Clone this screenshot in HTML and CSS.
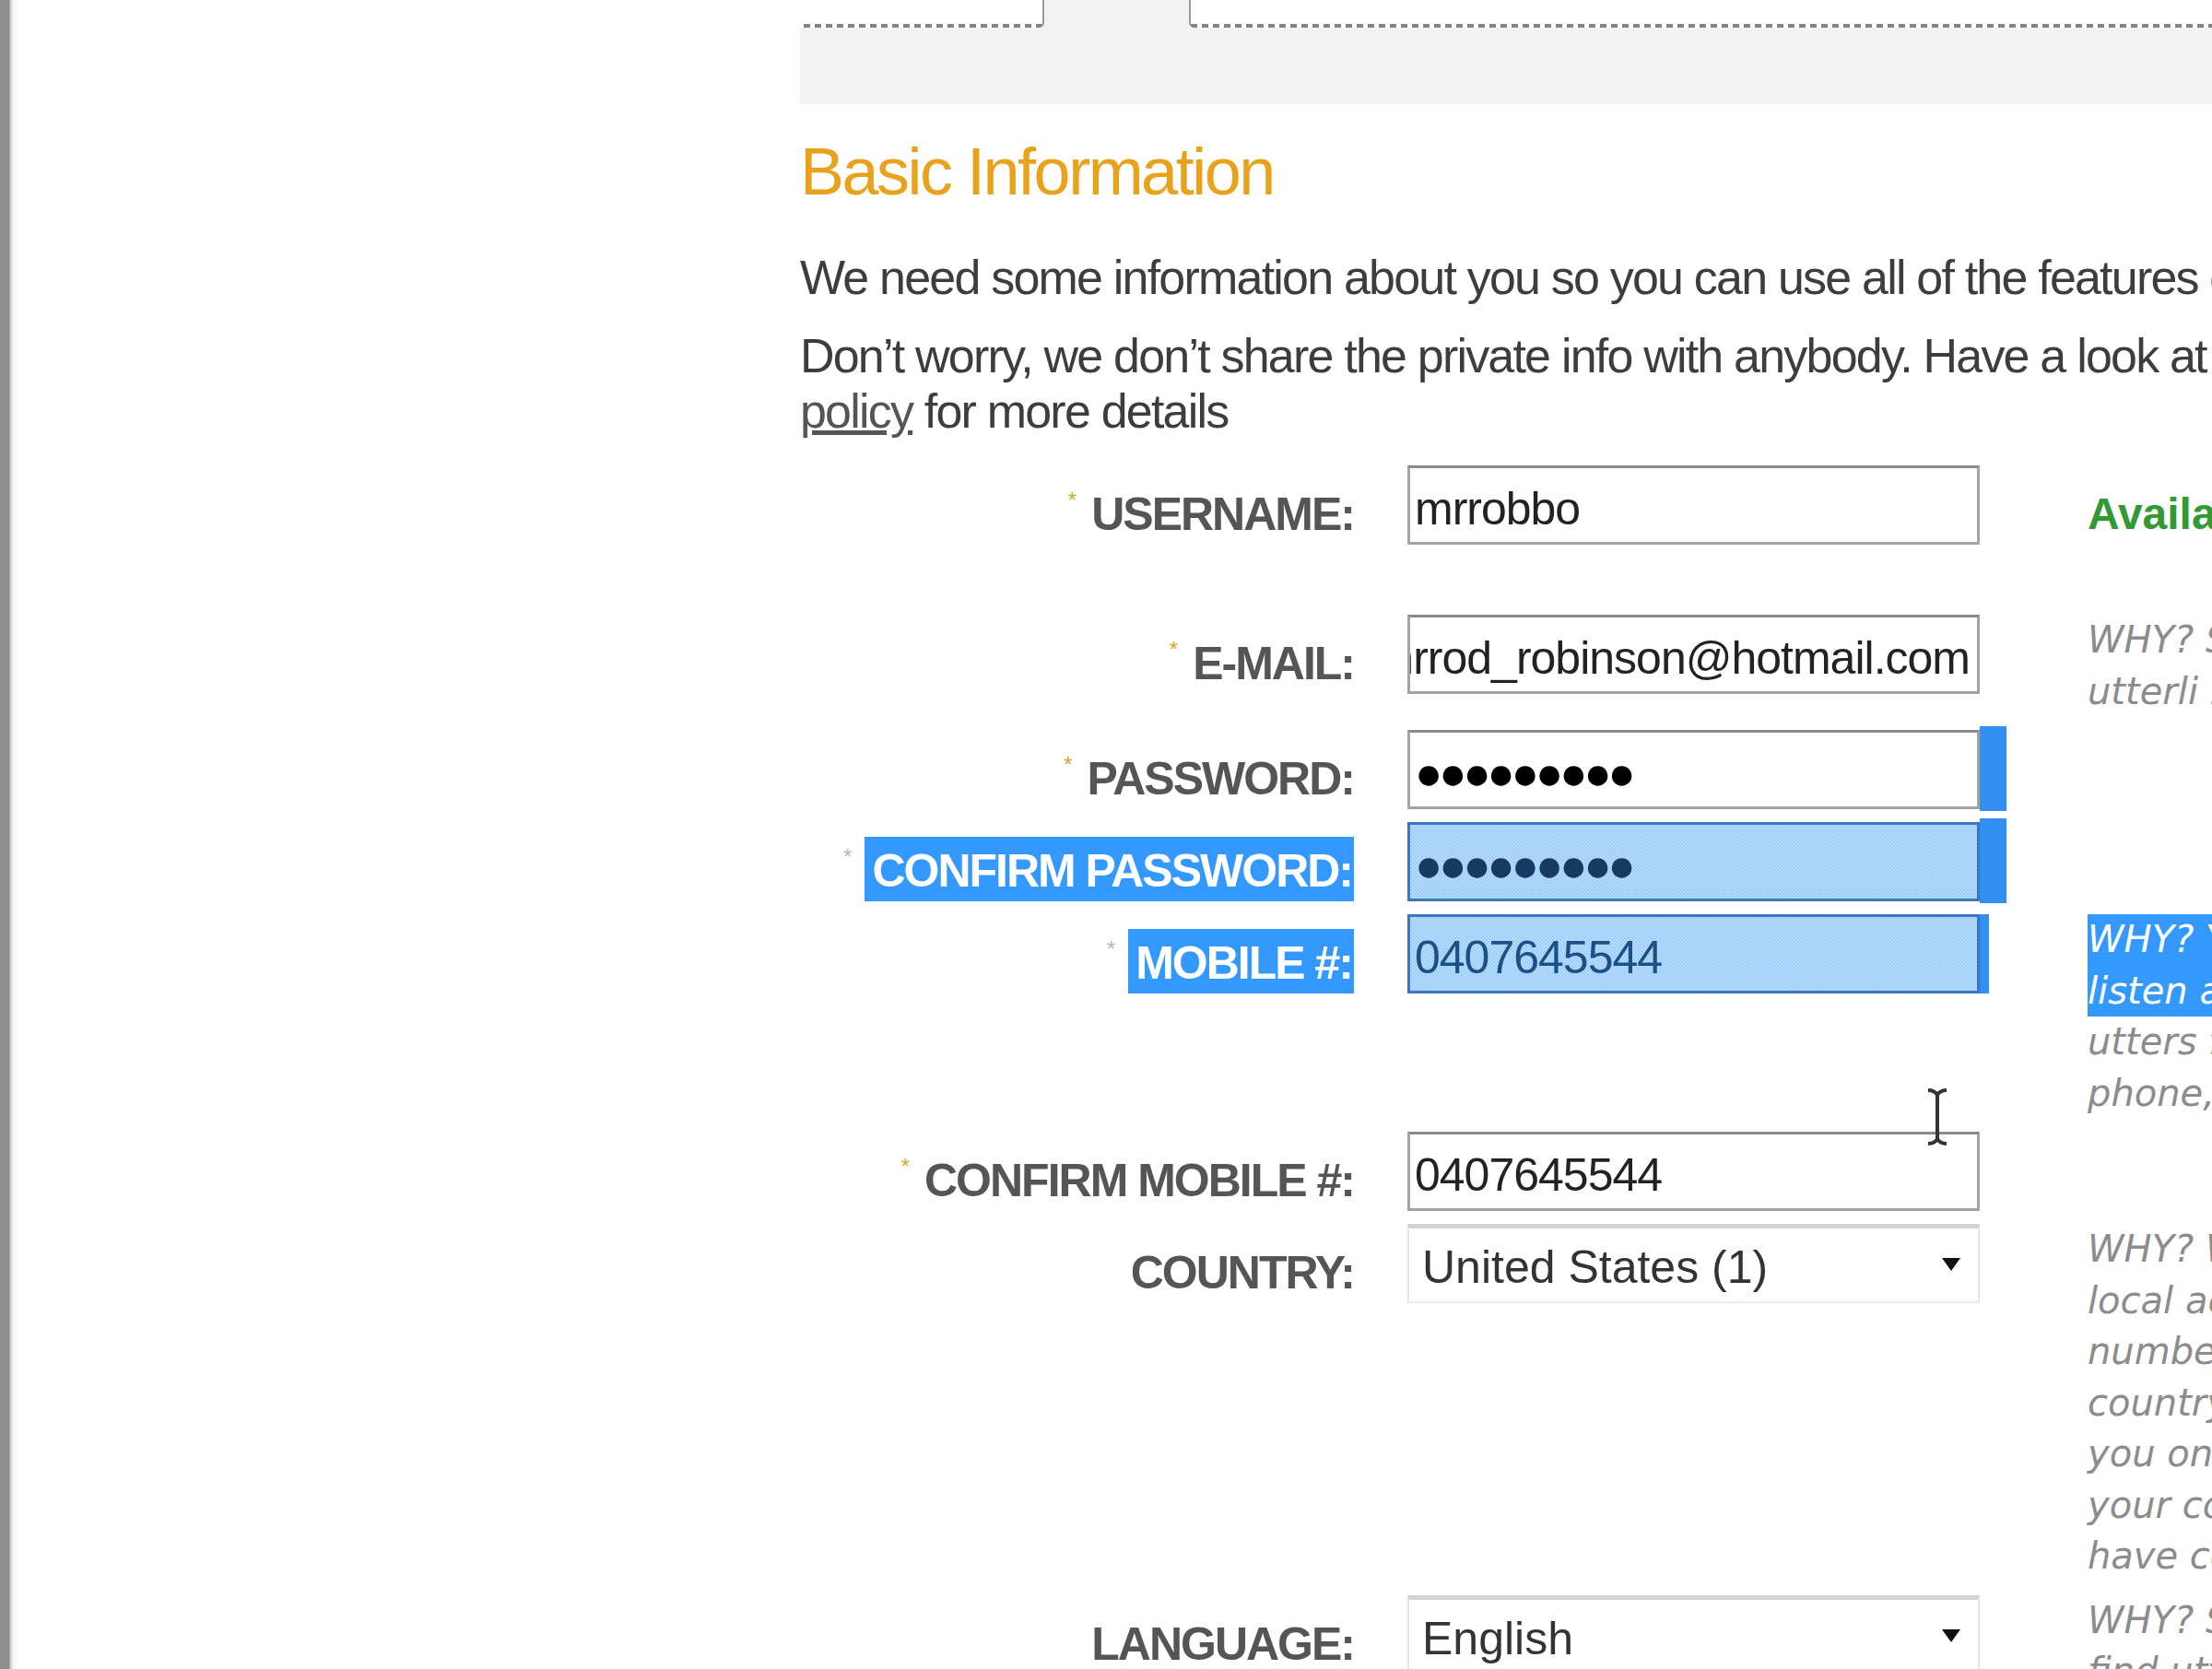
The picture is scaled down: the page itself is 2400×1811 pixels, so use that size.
FILE: index.html
```html
<!DOCTYPE html>
<html lang="en">
<head>
  <meta charset="UTF-8">
  <title>utterli – Sign up</title>
  <link rel="stylesheet" href="styles.css">
</head>
<body>
  <div class="edge"></div>

  <div class="page">
    <div class="tabs">
      <div class="tab"></div>
      <div class="tab active"></div>
      <div class="tab rest"></div>
    </div>
    <div class="tab-panel"></div>

    <h2 class="section-title">Basic Information</h2>
    <p class="intro first">We need some information about you so you can use all of the features of utterli.</p>
    <p class="intro">Don’t worry, we don’t share the private info with anybody. Have a look at our privacy <a href="#">policy</a> for more details</p>

    <form class="form" onsubmit="return false">
      <div class="row user">
        <label class="label"><span class="req">*</span>USERNAME:</label>
        <div class="cell"><div class="field">mrrobbo</div></div>
        <div class="status">Available!</div>
      </div>

      <div class="row">
        <label class="label"><span class="req">*</span>E-MAIL:</label>
        <div class="cell"><div class="field scrolled"><span>mrrod_robinson@hotmail.com</span></div></div>
        <p class="help">WHY? So we can let you know when<br>utterli replies to one of your utters.</p>
      </div>

      <div class="row">
        <label class="label"><span class="req">*</span>PASSWORD:</label>
        <div class="cell">
          <div class="field"><span class="dots">●●●●●●●●●</span></div>
          <span class="tail"></span>
        </div>
      </div>

      <div class="row">
        <label class="label"><span class="req faded">*</span><span class="sel">CONFIRM PASSWORD:</span></label>
        <div class="cell">
          <div class="field picked"><span class="dots">●●●●●●●●●</span></div>
          <span class="tail"></span>
        </div>
      </div>

      <div class="row">
        <label class="label"><span class="req faded">*</span><span class="sel">MOBILE #:</span></label>
        <div class="cell">
          <div class="field picked">0407645544</div>
          <span class="tail thin"></span>
        </div>
        <p class="help"><span class="sel-block">WHY? You can call in and<br>listen and reply to</span>utters from any<br>phone, anywhere.</p>
      </div>

      <div class="row">
        <label class="label"><span class="req">*</span>CONFIRM MOBILE #:</label>
        <div class="cell"><div class="field">0407645544</div></div>
      </div>

      <div class="row">
        <label class="label">COUNTRY:</label>
        <div class="cell"><div class="field select">United States (1)</div></div>
        <p class="help">WHY? We give you a<br>local access<br>number for your<br>country so you pay<br>you only a local call. If<br>your country doesn’t<br>have coverage yet, sorry.</p>
      </div>

      <div class="row">
        <label class="label">LANGUAGE:</label>
        <div class="cell"><div class="field select">English</div></div>
        <p class="help">WHY? So you can<br>find utters in your language.</p>
      </div>
    </form>
  </div>

  <!-- text cursor hovering over the form -->
  <svg class="ibeam" width="28" height="64" viewBox="0 0 28 64">
    <path d="M4 3 C9 3 12 5 14 8 C16 5 19 3 24 3 M14 8 V56 M4 61 C9 61 12 59 14 56 C16 59 19 61 24 61" stroke="#333" stroke-width="4" fill="none"/>
  </svg>
</body>
</html>
```

FILE: styles.css
```css
* {
  box-sizing: border-box;
}

html, body {
  margin: 0;
  height: 100%;
}

body {
  display: flex;
  background: #fff;
  overflow: hidden;
  font-family: "Liberation Sans", Arial, Helvetica, sans-serif;
  color: #3d3d3d;
}

/* window frame on the far left */
.edge {
  flex: 0 0 19px;
  background: linear-gradient(90deg, #8f8f8f 0 10px, #c9c9c9 11px, #f2f2f2 14px, #fff 19px);
}

.page {
  flex: 0 0 auto;
  width: 1820px;
  margin-left: 849px;
}

/* tab strip */
.tabs {
  display: flex;
  height: 30px;
  padding-left: 4px;
}

.tab {
  width: 261px;
  background: repeating-linear-gradient(90deg, #858585 0 7px, transparent 7px 12px) left bottom / 100% 4px no-repeat;
  border-right: 2px solid #9a9a9a;
  border-bottom-right-radius: 5px;
}

.tab.active {
  width: 157px;
  background: #f2f2f2;
  border: 0;
  border-radius: 0;
}

.tab.rest {
  flex: 1;
  border-right: 0;
  border-left: 2px solid #9a9a9a;
  border-radius: 0 0 0 5px;
}

.tab-panel {
  height: 83px;
  background: #f2f2f2;
}

.section-title {
  margin: 30px 0 0;
  font-size: 72px;
  line-height: 86px;
  font-weight: normal;
  letter-spacing: -2.5px;
  color: #e8a21c;
}

.intro {
  margin: 25px 0 0;
  font-size: 52px;
  line-height: 60px;
  letter-spacing: -1.8px;
}

.intro.first {
  margin-top: 42px;
}

.intro a {
  color: #555;
}

/* signup form */
.form {
  margin-top: 29px;
}

.row {
  display: grid;
  grid-template-columns: 601px 680px 1fr;
  column-gap: 58px;
  align-items: start;
  margin-bottom: 14px;
}

.row.user {
  min-height: 148px;
}

.label {
  text-align: right;
  font-weight: bold;
  font-size: 50px;
  line-height: 66px;
  padding-top: 20px;
  letter-spacing: -2px;
  color: #555;
  white-space: nowrap;
}

.req {
  font-size: 24px;
  line-height: 1;
  font-weight: normal;
  letter-spacing: 0;
  vertical-align: 24px;
  margin-right: 16px;
  color: #e0a62c;
}

.req.faded {
  color: #a9b9cc;
  margin-right: 14px;
}

.sel {
  background: #3399ff;
  color: #fff;
  padding: 9px 2px 5px 8px;
}

.cell {
  display: flex;
  align-items: stretch;
}

.field {
  width: 621px;
  height: 86px;
  border: 3px solid #a3a3a3;
  border-top-color: #8a8a8a;
  padding: 8px 8px 0 5px;
  font-size: 50px;
  line-height: 72px;
  letter-spacing: -1px;
  color: #222;
  background: #fff;
  white-space: nowrap;
  overflow: hidden;
}

.field.scrolled {
  display: flex;
  justify-content: flex-end;
}

.field.scrolled span {
  flex-shrink: 0;
}

.dots {
  font-size: 50px;
  letter-spacing: -4px;
  color: #000;
}

.field.picked {
  background: repeating-conic-gradient(#9fcdf8 0 25%, #b5dbfd 0 50%) 0 0 / 4px 4px;
  border-color: #3b76c2;
  color: #1d4f87;
}

.field.picked .dots {
  color: #173a63;
}

.tail {
  width: 29px;
  margin: -4px 0 -2px;
  background: #3390f0;
}

.tail.thin {
  width: 10px;
  margin: 0;
}

.field.select {
  display: flex;
  justify-content: space-between;
  border-width: 5px 2px 2px;
  border-color: #d3d3d3 #e6e6e6 #ececec;
  padding: 6px 19px 0 14px;
  letter-spacing: 0;
  color: #333;
}

.field.select::after {
  content: "";
  align-self: flex-start;
  margin-top: 26px;
  border: 10px solid transparent;
  border-top: 14px solid #111;
  border-bottom: 0;
}

.status {
  font-weight: bold;
  font-size: 48px;
  line-height: 84px;
  padding-top: 11px;
  color: #339933;
  white-space: nowrap;
}

.help {
  margin: 0;
  font-family: "DejaVu Sans", Verdana, sans-serif;
  font-style: italic;
  font-size: 40px;
  line-height: 55.5px;
  color: #8c8c8c;
  white-space: nowrap;
}

.help .sel-block {
  display: block;
  background: #3399ff;
  color: #fff;
}

.ibeam {
  position: absolute;
  left: 2088px;
  top: 1180px;
}
```
